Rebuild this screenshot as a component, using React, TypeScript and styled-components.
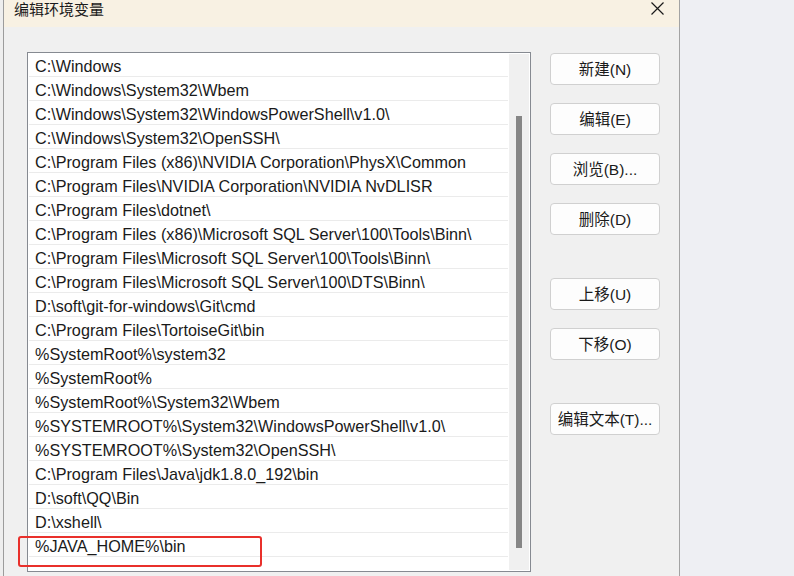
import React from 'react';
import styled, { createGlobalStyle } from 'styled-components';

const paths = [
  'C:\\Windows',
  'C:\\Windows\\System32\\Wbem',
  'C:\\Windows\\System32\\WindowsPowerShell\\v1.0\\',
  'C:\\Windows\\System32\\OpenSSH\\',
  'C:\\Program Files (x86)\\NVIDIA Corporation\\PhysX\\Common',
  'C:\\Program Files\\NVIDIA Corporation\\NVIDIA NvDLISR',
  'C:\\Program Files\\dotnet\\',
  'C:\\Program Files (x86)\\Microsoft SQL Server\\100\\Tools\\Binn\\',
  'C:\\Program Files\\Microsoft SQL Server\\100\\Tools\\Binn\\',
  'C:\\Program Files\\Microsoft SQL Server\\100\\DTS\\Binn\\',
  'D:\\soft\\git-for-windows\\Git\\cmd',
  'C:\\Program Files\\TortoiseGit\\bin',
  '%SystemRoot%\\system32',
  '%SystemRoot%',
  '%SystemRoot%\\System32\\Wbem',
  '%SYSTEMROOT%\\System32\\WindowsPowerShell\\v1.0\\',
  '%SYSTEMROOT%\\System32\\OpenSSH\\',
  'C:\\Program Files\\Java\\jdk1.8.0_192\\bin',
  'D:\\soft\\QQ\\Bin',
  'D:\\xshell\\',
  '%JAVA_HOME%\\bin',
];

const buttons = [
  { label: '新建(N)', gap: 1 },
  { label: '编辑(E)', gap: 18 },
  { label: '浏览(B)...', gap: 18 },
  { label: '删除(D)', gap: 18 },
  { label: '上移(U)', gap: 43 },
  { label: '下移(O)', gap: 18 },
  { label: '编辑文本(T)...', gap: 43 },
];

const GlobalStyle = createGlobalStyle`
  html, body {
    margin: 0;
    padding: 0;
    background: #eeeff3;
    font-family: "Liberation Sans", "Noto Sans CJK SC", sans-serif;
    overflow: hidden;
  }
`;

const Screen = styled.div`
  display: flex;
  width: 794px;
  height: 576px;
  background: #eeeff3;
`;

const LeftStrip = styled.div`
  width: 3px;
  background: #eeeeee;
  border-right: 1px solid #9c9c9c;
`;

const Dialog = styled.div`
  width: 675px;
  display: flex;
  flex-direction: column;
  background: #f0f0f0;
  border-right: 1px solid #a3a3a3;
`;

const TitleBar = styled.div`
  height: 27px;
  flex-shrink: 0;
  display: flex;
  align-items: center;
  justify-content: space-between;
  background: #f8f1e3;
  padding: 0 14px 0 10px;
`;

const Title = styled.span`
  font-size: 15px;
  color: #1b1b1b;
  margin-top: -10px;
`;

const CloseIcon = styled.svg`
  width: 15px;
  height: 15px;
  margin-top: -11px;
`;

const Body = styled.div`
  display: flex;
  padding: 25px 0 0 23px;
  gap: 19px;
`;

const ListWrap = styled.div`
  position: relative;
`;

const ListBox = styled.div`
  width: 502px;
  height: 518px;
  border: 1px solid #868a91;
  background: #ffffff;
  display: flex;
`;

const Rows = styled.div`
  flex: 1;
  display: flex;
  flex-direction: column;
  padding: 0 1px;
`;

const Row = styled.div`
  height: 23px;
  flex-shrink: 0;
  box-sizing: border-box;
  height: 24px;
  border-bottom: 1px solid #ebebeb;
  display: flex;
  align-items: center;
  padding: 3px 0 0 6px;
  font-size: 16.2px;
  color: #1a1a1a;
  white-space: nowrap;
  overflow: hidden;
`;

const Scrollbar = styled.div`
  width: 20px;
  margin: 1px 1px 1px 0;
  background: #f0f0f0;
  display: flex;
  justify-content: center;
  padding-top: 62px;
  box-sizing: border-box;
`;

const Thumb = styled.div`
  width: 6px;
  height: 432px;
  background: #868686;
`;

const Highlight = styled.div`
  position: absolute;
  left: -9px;
  top: 484px;
  width: 240px;
  height: 27px;
  border: 2px solid #e9302b;
  border-radius: 3px;
  pointer-events: none;
`;

const ButtonCol = styled.div`
  display: flex;
  flex-direction: column;
`;

const Button = styled.button<{ $gap: number }>`
  width: 110px;
  height: 32px;
  margin-top: ${p => p.$gap}px;
  border: 1px solid #d0d0d0;
  border-radius: 4px;
  background: #fdfdfd;
  font-family: "Liberation Sans", "Noto Sans CJK SC", sans-serif;
  font-size: 15.5px;
  color: #1a1a1a;
  padding: 0 0 2px;
`;

export default function App() {
  return (
    <Screen>
      <GlobalStyle />
      <LeftStrip />
      <Dialog>
        <TitleBar>
          <Title>编辑环境变量</Title>
          <CloseIcon viewBox="0 0 15 15">
            <path d="M1.5 1.5 L13.5 13.5 M13.5 1.5 L1.5 13.5" stroke="#1a1a1a" strokeWidth="1.2" />
          </CloseIcon>
        </TitleBar>
        <Body>
          <ListWrap>
            <ListBox>
              <Rows>
                {paths.map(p => (
                  <Row key={p}>{p}</Row>
                ))}
              </Rows>
              <Scrollbar>
                <Thumb />
              </Scrollbar>
            </ListBox>
            <Highlight />
          </ListWrap>
          <ButtonCol>
            {buttons.map(b => (
              <Button key={b.label} $gap={b.gap}>{b.label}</Button>
            ))}
          </ButtonCol>
        </Body>
      </Dialog>
    </Screen>
  );
}
